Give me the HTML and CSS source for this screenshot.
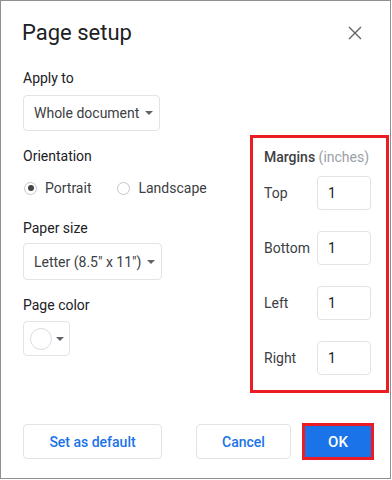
FILE: index.html
```html
<!DOCTYPE html>
<html lang="en">
<head>
    <meta charset="UTF-8">
    <title>Page setup</title>
    <link rel="stylesheet" href="styles.css">
</head>
<body>
    <div class="dialog">
        <div class="header">
            <h1 class="title">Page setup</h1>
            <svg class="close" width="14" height="14" viewBox="0 0 14 14">
                <path d="M1 1L13 13M13 1L1 13" stroke="#5f6368" stroke-width="1.4" fill="none"/>
            </svg>
        </div>

        <div class="content">
            <div class="left">
                <div class="label">Apply to</div>
                <div class="select apply">Whole document <span class="caret"></span></div>

                <div class="label orientation">Orientation</div>
                <div class="radios">
                    <span class="radio checked"></span><span class="radio-text">Portrait</span>
                    <span class="radio"></span><span class="radio-text">Landscape</span>
                </div>

                <div class="label paper">Paper size</div>
                <div class="select paper-select">Letter (8.5" x 11") <span class="caret"></span></div>

                <div class="label color">Page color</div>
                <div class="color-btn"><span class="swatch"></span><span class="caret"></span></div>
            </div>

            <div class="margins">
                <div class="margins-title">Margins <span class="unit">(inches)</span></div>
                <div class="row"><span class="row-label">Top</span><div class="input">1</div></div>
                <div class="row"><span class="row-label">Bottom</span><div class="input">1</div></div>
                <div class="row"><span class="row-label">Left</span><div class="input">1</div></div>
                <div class="row"><span class="row-label">Right</span><div class="input">1</div></div>
            </div>
        </div>

        <div class="footer">
            <button class="btn default">Set as default</button>
            <button class="btn cancel">Cancel</button>
            <button class="btn ok">OK</button>
        </div>
    </div>
</body>
</html>
```

FILE: styles.css
```css
body {
    margin: 0;
    font-family: Roboto, "Liberation Sans", Arial, sans-serif;
    color: #3c4043;
    background: #fff;
}

.dialog {
    width: 391px;
    height: 479px;
    box-sizing: border-box;
    border: 1px solid #8f8f8f;
    display: flex;
    flex-direction: column;
}

.header {
    display: flex;
    justify-content: space-between;
    align-items: center;
    padding: 17px 28px 0 21px;
    height: 30px;
}

.title {
    margin: 0;
    font-size: 22px;
    font-weight: 400;
    line-height: 30px;
    color: #202124;
}

.content {
    display: flex;
    align-items: flex-start;
    padding-left: 22px;
    margin-top: 20px;
}

.left {
    width: 227px;
}

.label {
    font-size: 14px;
    line-height: 20px;
    color: #202124;
}

.select {
    display: flex;
    align-items: center;
    justify-content: space-between;
    box-sizing: border-box;
    height: 36px;
    padding: 0 10px;
    border: 1px solid #e3e3e3;
    border-radius: 4px;
    font-size: 14px;
    color: #3c4043;
    white-space: nowrap;
}

.apply {
    margin-top: 7px;
    width: 137px;
}

.caret {
    display: inline-block;
    width: 0;
    height: 0;
    border-left: 4px solid transparent;
    border-right: 4px solid transparent;
    border-top: 4px solid #5f6368;
    margin-left: 6px;
}

.orientation {
    margin-top: 15px;
}

.radios {
    display: flex;
    align-items: center;
    height: 20px;
    margin-top: 12px;
    font-size: 14px;
}

.radio {
    width: 13px;
    height: 13px;
    border: 1px solid #c6c6c6;
    border-radius: 50%;
    box-sizing: border-box;
    margin-left: 1px;
    position: relative;
}

.radio.checked::after {
    content: "";
    position: absolute;
    left: 2.5px;
    top: 2.5px;
    width: 6px;
    height: 6px;
    border-radius: 50%;
    background: #444;
}

.radio-text {
    margin-left: 8px;
    margin-right: 25px;
    color: #3c4043;
}

.paper {
    margin-top: 20px;
}

.paper-select {
    margin-top: 5px;
    width: 139px;
    height: 37px;
}

.color {
    margin-top: 15px;
}

.color-btn {
    display: flex;
    align-items: center;
    box-sizing: border-box;
    width: 47px;
    height: 35px;
    margin-top: 6px;
    padding-left: 6px;
    border: 1px solid #e3e3e3;
    border-radius: 4px;
}

.swatch {
    width: 22px;
    height: 22px;
    border: 1px solid #dadce0;
    border-radius: 50%;
    box-sizing: border-box;
}

.color-btn .caret {
    margin-left: 4px;
}

.margins {
    margin-top: 67px;
    width: 139px;
    box-sizing: border-box;
    border: 3px solid #ec1c24;
    padding: 9px 0 15px 11px;
}

.margins-title {
    font-size: 14px;
    line-height: 20px;
    font-weight: 500;
    color: #3c4043;
}

.unit {
    font-weight: 400;
    color: #9aa0a6;
}

.row {
    display: flex;
    align-items: center;
    margin-top: 21px;
    font-size: 14px;
}

.margins-title + .row {
    margin-top: 9px;
}

.row-label {
    width: 53px;
    color: #3c4043;
}

.input {
    box-sizing: border-box;
    width: 54px;
    height: 34px;
    border: 1px solid #e3e3e3;
    border-radius: 4px;
    padding-left: 10px;
    line-height: 32px;
    color: #202124;
}

.footer {
    display: flex;
    align-items: center;
    margin-top: auto;
    padding: 0 0 18px 22px;
}

.btn {
    font-family: Roboto, "Liberation Sans", Arial, sans-serif;
    font-size: 14px;
    font-weight: 500;
    height: 35px;
    box-sizing: border-box;
    border: 1px solid #e3e3e3;
    border-radius: 4px;
    background: #fff;
    color: #1a73e8;
    padding: 0;
}

.default {
    width: 139px;
}

.cancel {
    width: 95px;
    margin-left: 34px;
}

.ok {
    width: 72px;
    height: 37px;
    margin-left: 11px;
    border: 3px solid #ec1c24;
    border-radius: 0;
    background: #1a73e8;
    color: #fff;
    font-size: 15px;
}
```
